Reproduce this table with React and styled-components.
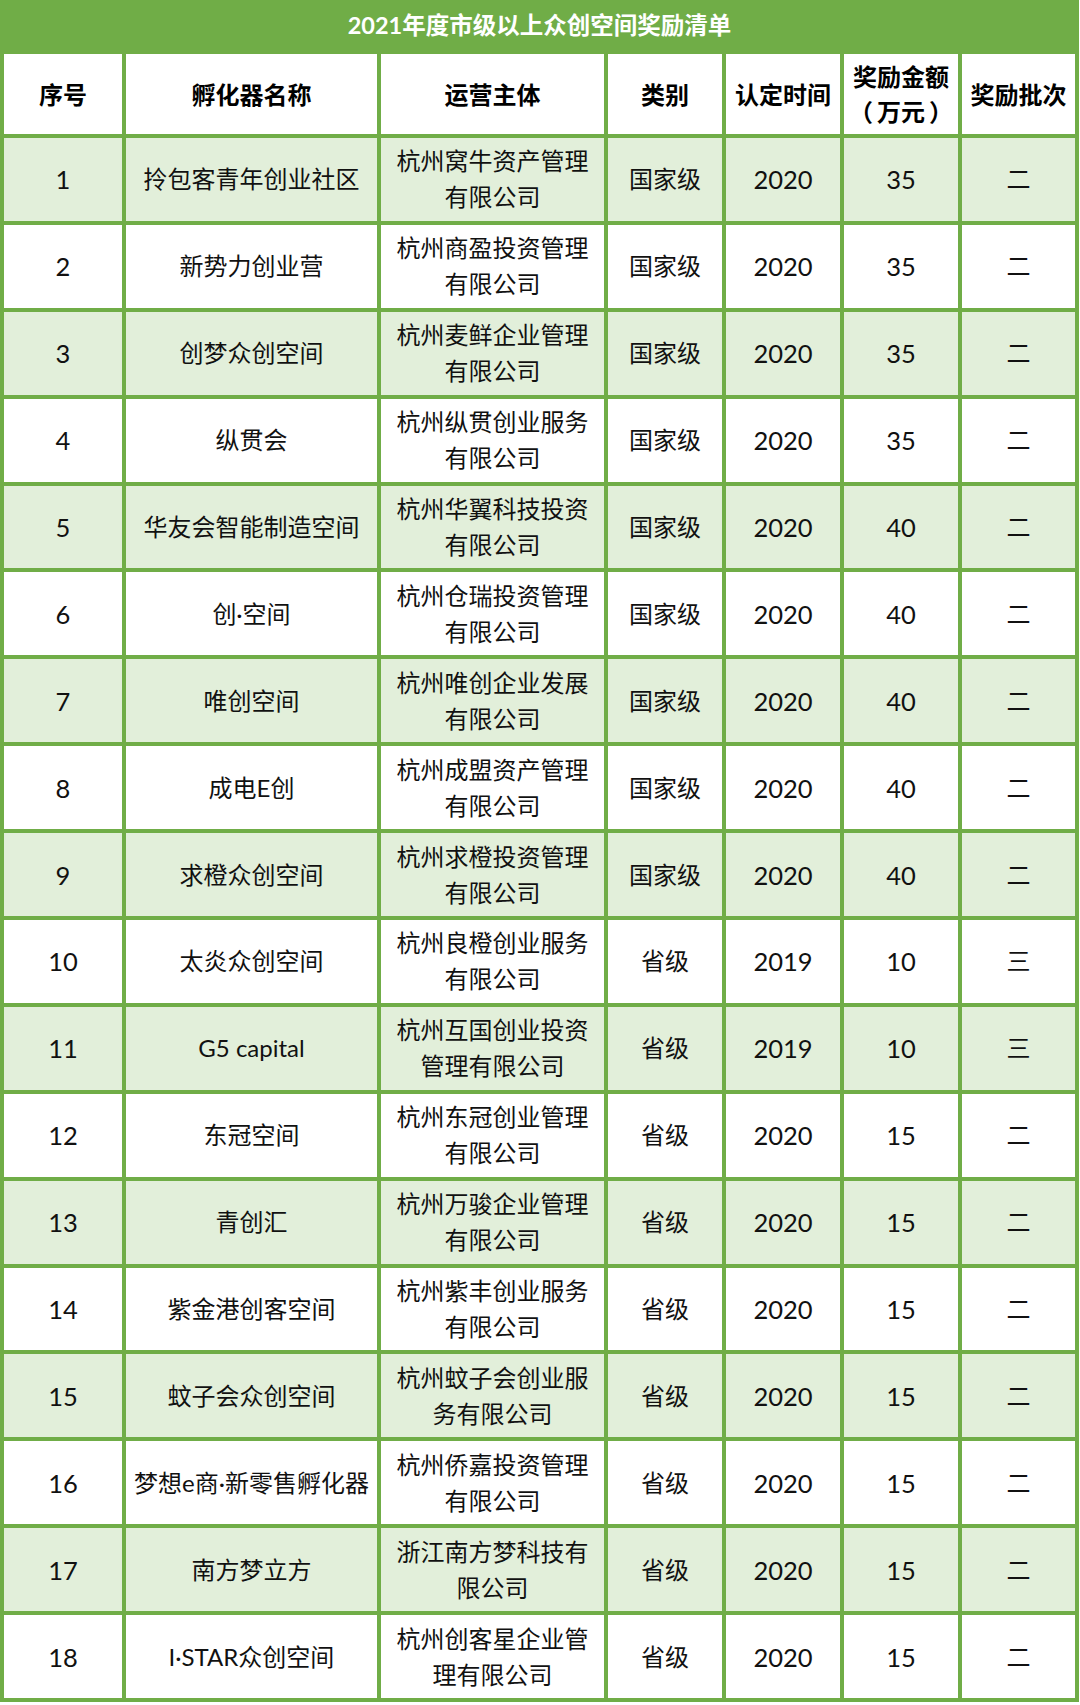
import React from "react";
import styled, { createGlobalStyle } from "styled-components";

const rows = [
  ["1", "拎包客青年创业社区", ["杭州窝牛资产管理", "有限公司"], "国家级", "2020", "35", "二"],
  ["2", "新势力创业营", ["杭州商盈投资管理", "有限公司"], "国家级", "2020", "35", "二"],
  ["3", "创梦众创空间", ["杭州麦鲜企业管理", "有限公司"], "国家级", "2020", "35", "二"],
  ["4", "纵贯会", ["杭州纵贯创业服务", "有限公司"], "国家级", "2020", "35", "二"],
  ["5", "华友会智能制造空间", ["杭州华翼科技投资", "有限公司"], "国家级", "2020", "40", "二"],
  ["6", "创·空间", ["杭州仓瑞投资管理", "有限公司"], "国家级", "2020", "40", "二"],
  ["7", "唯创空间", ["杭州唯创企业发展", "有限公司"], "国家级", "2020", "40", "二"],
  ["8", "成电E创", ["杭州成盟资产管理", "有限公司"], "国家级", "2020", "40", "二"],
  ["9", "求橙众创空间", ["杭州求橙投资管理", "有限公司"], "国家级", "2020", "40", "二"],
  ["10", "太炎众创空间", ["杭州良橙创业服务", "有限公司"], "省级", "2019", "10", "三"],
  ["11", "G5 capital", ["杭州互国创业投资", "管理有限公司"], "省级", "2019", "10", "三"],
  ["12", "东冠空间", ["杭州东冠创业管理", "有限公司"], "省级", "2020", "15", "二"],
  ["13", "青创汇", ["杭州万骏企业管理", "有限公司"], "省级", "2020", "15", "二"],
  ["14", "紫金港创客空间", ["杭州紫丰创业服务", "有限公司"], "省级", "2020", "15", "二"],
  ["15", "蚊子会众创空间", ["杭州蚊子会创业服", "务有限公司"], "省级", "2020", "15", "二"],
  ["16", "梦想e商·新零售孵化器", ["杭州侨嘉投资管理", "有限公司"], "省级", "2020", "15", "二"],
  ["17", "南方梦立方", ["浙江南方梦科技有", "限公司"], "省级", "2020", "15", "二"],
  ["18", "I·STAR众创空间", ["杭州创客星企业管", "理有限公司"], "省级", "2020", "15", "二"],
];

const heads = [["序号"], ["孵化器名称"], ["运营主体"], ["类别"], ["认定时间"], ["奖励金额", "（万元）"], ["奖励批次"]];

// columns holding plain numbers get the slightly larger figure size
const numericCols = [0, 4, 5];

// "（万元）": brackets stand a little apart from the unit, as in the sheet
const HeadLine = ({ text }) => {
  if (text.startsWith("（")) {
    return (
      <Line>
        <Paren>（</Paren>
        {text.slice(1, -1)}
        <Paren>）</Paren>
      </Line>
    );
  }
  return <Line>{text}</Line>;
};

const App = () => {
  return (
    <>
      <GlobalStyle />
      <Sheet>
        <TitleCell>2021年度市级以上众创空间奖励清单</TitleCell>
        {heads.map((h, i) => (
          <HeadCell key={i}>
            {h.map((line) => (
              <HeadLine key={line} text={line} />
            ))}
          </HeadCell>
        ))}
        {rows.map((row, r) =>
          row.map((val, c) => (
            <Cell key={r + "-" + c} $shade={r % 2 === 0} $num={numericCols.includes(c)}>
              {Array.isArray(val) ? val.map((line) => <Line key={line}>{line}</Line>) : val}
            </Cell>
          ))
        )}
      </Sheet>
    </>
  );
};

export default App;

const GlobalStyle = createGlobalStyle`
  body {
    margin: 0;
    background: #ffffff;
    font-family: Lato, "Noto Sans CJK SC", sans-serif;
  }
`;

const Sheet = styled.div`
  display: grid;
  width: 1079px;
  box-sizing: border-box;
  grid-template-columns: 118px 251px 223px 114px 114px 114px 113px;
  grid-template-rows: 46px 80px;
  grid-auto-rows: 82.9px;
  gap: 4px;
  padding: 4px;
  background: #70ad47;
`;

const TitleCell = styled.div`
  grid-column: 1 / -1;
  display: flex;
  align-items: center;
  justify-content: center;
  color: #ffffff;
  font-weight: 700;
  font-size: 23.5px;
  padding-bottom: 7px;
`;

const HeadCell = styled.div`
  display: flex;
  flex-direction: column;
  align-items: center;
  justify-content: center;
  background: #ffffff;
  color: #000000;
  font-weight: 700;
  font-size: 24px;
  line-height: 35px;
  white-space: nowrap;
`;

const Cell = styled.div`
  display: flex;
  flex-direction: column;
  align-items: center;
  justify-content: center;
  background: ${(p) => (p.$shade ? "#e2efda" : "#ffffff")};
  color: #111111;
  font-size: ${(p) => (p.$num ? "25.5px" : "24px")};
  line-height: 36px;
  white-space: nowrap;
`;

const Line = styled.span`
  display: block;
`;

const Paren = styled.span`
  display: inline-block;
  margin: 0 4px;
`;
